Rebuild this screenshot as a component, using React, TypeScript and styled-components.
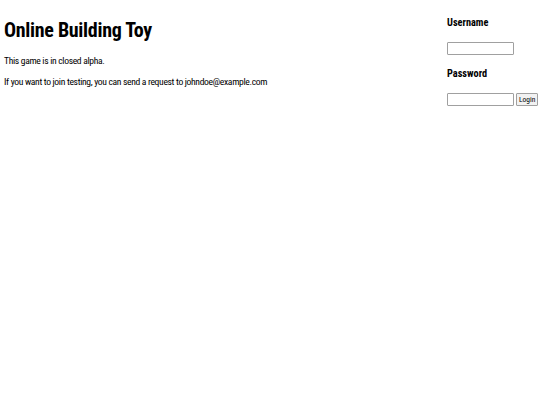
import React from "react";
import styled, { createGlobalStyle } from "styled-components";

const Global = createGlobalStyle`
  html, body { margin: 0; padding: 0; background: #fff; }
  body { font-family: "Roboto Condensed", "DejaVu Sans", sans-serif; color: #000; }
`;

const Page = styled.div`
  display: flex;
  justify-content: space-between;
  align-items: flex-start;
  padding: 0 3px 0 4px;
`;

const Main = styled.main`
  display: flex;
  flex-direction: column;
`;

const Title = styled.h1`
  margin: 17px 0 0;
  font-size: 20px;
  font-weight: bold;
  letter-spacing: -0.3px;
  line-height: 26px;
`;

const Text = styled.p<{ $top: number }>`
  margin: ${(p) => p.$top}px 0 0;
  font-size: 9.6px;
  letter-spacing: -0.33px;
  line-height: 12px;
`;

const Side = styled.aside`
  width: 90px;
  display: flex;
  flex-direction: column;
  padding-top: 17px;
`;

const Label = styled.label<{ $top: number }>`
  display: block;
  margin-top: ${(p) => p.$top}px;
  font-size: 10.3px;
  font-weight: bold;
  line-height: 12px;
`;

const Row = styled.div<{ $top: number }>`
  display: flex;
  align-items: center;
  gap: 2px;
  margin-top: ${(p) => p.$top}px;
`;

const Input = styled.input`
  box-sizing: border-box;
  width: 67px;
  height: 13px;
  border: 1px solid #a0a0a0;
  border-radius: 1px;
  padding: 0;
  margin: 0;
  background: #fff;
`;

const Button = styled.button`
  box-sizing: border-box;
  height: 13px;
  padding: 0 2px;
  margin: 0;
  border: 1px solid #a0a0a0;
  border-radius: 1px;
  background: #f2f2f2;
  font-family: "Roboto Condensed", sans-serif;
  font-size: 7.5px;
  line-height: 11px;
  color: #000;
`;

export default function App() {
  return (
    <>
      <Global />
      <Page>
        <Main>
          <Title>Online Building Toy</Title>
          <Text $top={12}>This game is in closed alpha.</Text>
          <Text $top={9}>If you want to join testing, you can send a request to johndoe@example.com</Text>
        </Main>
        <Side>
          <Label $top={0}>Username</Label>
          <Row $top={13}>
            <Input type="text" />
          </Row>
          <Label $top={13}>Password</Label>
          <Row $top={13}>
            <Input type="password" />
            <Button>Login</Button>
          </Row>
        </Side>
      </Page>
    </>
  );
}
